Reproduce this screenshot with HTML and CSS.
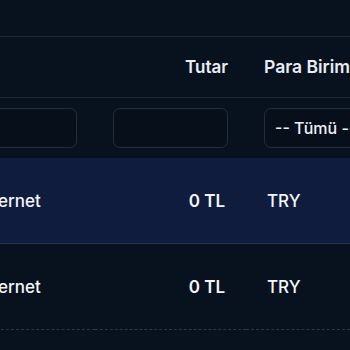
FILE: index.html
```html
<!DOCTYPE html>
<html lang="tr">
<head>
<meta charset="utf-8">
<link rel="stylesheet" href="styles.css">
</head>
<body>
<div class="viewport">
  <div class="topbar"></div>
  <div class="scroller">
    <table class="grid">
      <colgroup>
        <col class="c-name">
        <col class="c-amount">
        <col class="c-cur">
      </colgroup>
      <thead>
        <tr class="head">
          <th class="left">Ad</th>
          <th class="right">Tutar</th>
          <th class="left">Para Birimi</th>
        </tr>
        <tr class="filters">
          <td><input class="field" type="text"></td>
          <td><input class="field" type="text"></td>
          <td><div class="select">-- Tümü --</div></td>
        </tr>
      </thead>
      <tbody>
        <tr class="row selected">
          <td class="left">Ev İnternet</td>
          <td class="right amount">0 TL</td>
          <td class="left cur">TRY</td>
        </tr>
        <tr class="row last">
          <td class="left">Ev İnternet</td>
          <td class="right amount">0 TL</td>
          <td class="left cur">TRY</td>
        </tr>
      </tbody>
    </table>
  </div>
</div>
</body>
</html>
```

FILE: styles.css
```css
html, body {
  margin: 0;
  padding: 0;
  background: #08121f;
}
body {
  font-family: Inter, "Noto Sans", sans-serif;
  color: #f1f5f9;
}
.viewport {
  width: 350px;
  height: 350px;
  overflow: hidden;
  background: #08121f;
}
.topbar {
  height: 36px;
  border-bottom: 1px solid #1c2737;
}
.scroller {
  overflow: hidden;
}
.grid {
  margin-left: -65px;
  border-collapse: collapse;
  table-layout: fixed;
  width: 511px;
  font-size: 17px;
  line-height: 20px;
}
.c-name { width: 160px; }
.c-amount { width: 151px; }
.c-cur { width: 200px; }
th, td {
  padding: 0 18px;
  white-space: nowrap;
  overflow: hidden;
}
.left { text-align: left; }
.right { text-align: right; }
.head th {
  height: 60px;
  font-weight: 600;
  color: #e8edf4;
  border-bottom: 1px solid #1c2737;
  vertical-align: middle;
}
.head th:last-child { font-size: 17.5px; }
.filters td {
  height: 60px;
  vertical-align: middle;
}
.field {
  display: block;
  box-sizing: border-box;
  width: 100%;
  height: 40px;
  margin: 0;
  background: #070f1b;
  border: 1px solid #222e40;
  border-radius: 7px;
  outline: none;
}
.select {
  box-sizing: border-box;
  width: 150px;
  height: 40px;
  padding: 0 10px;
  display: flex;
  align-items: center;
  background: #070f1b;
  border: 1px solid #222e40;
  border-radius: 7px;
  font-weight: 500;
  font-size: 16px;
  color: #eef2f7;
}
.row td {
  height: 85px;
  vertical-align: middle;
  font-weight: 500;
  color: #f3f6fa;
}
.row .amount {
  font-weight: 600;
  padding-right: 21px;
}
.row .cur { padding-left: 21px; }
.selected td {
  background: #101c3d;
  border-bottom: 1px solid #253350;
}
.last td {
  border-bottom: 1px dashed #2a3546;
}
```
